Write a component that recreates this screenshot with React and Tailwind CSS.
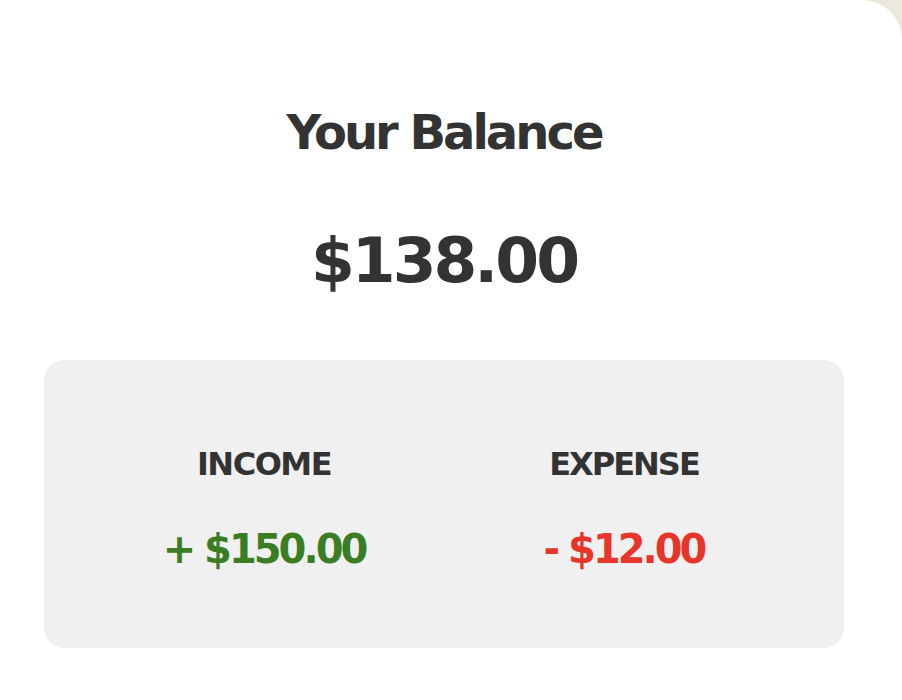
const App = () => {
  return (
    <div className="min-h-[700px] w-full bg-[#ebe9dc]" style={{ fontFamily: '"DejaVu Sans", Verdana, sans-serif' }}>
      <div className="min-h-[700px] w-full rounded-tr-[40px] bg-white pr-[14px]">
        <div className="flex flex-col items-center pt-[96px]">
          <h2 className="text-[48px] font-bold leading-[72px] tracking-[-3px] text-[#333333]">Your Balance</h2>
          <h1 className="mt-[53px] text-[63px] font-bold leading-[80px] tracking-[-3px] text-[#333333]">$138.00</h1>
        </div>
        <div className="mx-[44px] mt-[59px] flex h-[288px] rounded-[20px] bg-[#f0f0f0] px-[40px] pt-[80px]">
          <div className="flex flex-1 flex-col items-center">
            <h4 className="text-[32px] font-bold leading-[48px] tracking-[-1.5px] text-[#333333]">INCOME</h4>
            <p className="mt-[36px] text-[40px] font-bold leading-[50px] tracking-[-3px] text-[#3a7d22]">+ $150.00</p>
          </div>
          <div className="flex flex-1 flex-col items-center">
            <h4 className="text-[32px] font-bold leading-[48px] tracking-[-2px] text-[#333333]">EXPENSE</h4>
            <p className="mt-[36px] text-[40px] font-bold leading-[50px] tracking-[-3px] text-[#e8352a]">- $12.00</p>
          </div>
        </div>
      </div>
    </div>
  );
};

export default App;
